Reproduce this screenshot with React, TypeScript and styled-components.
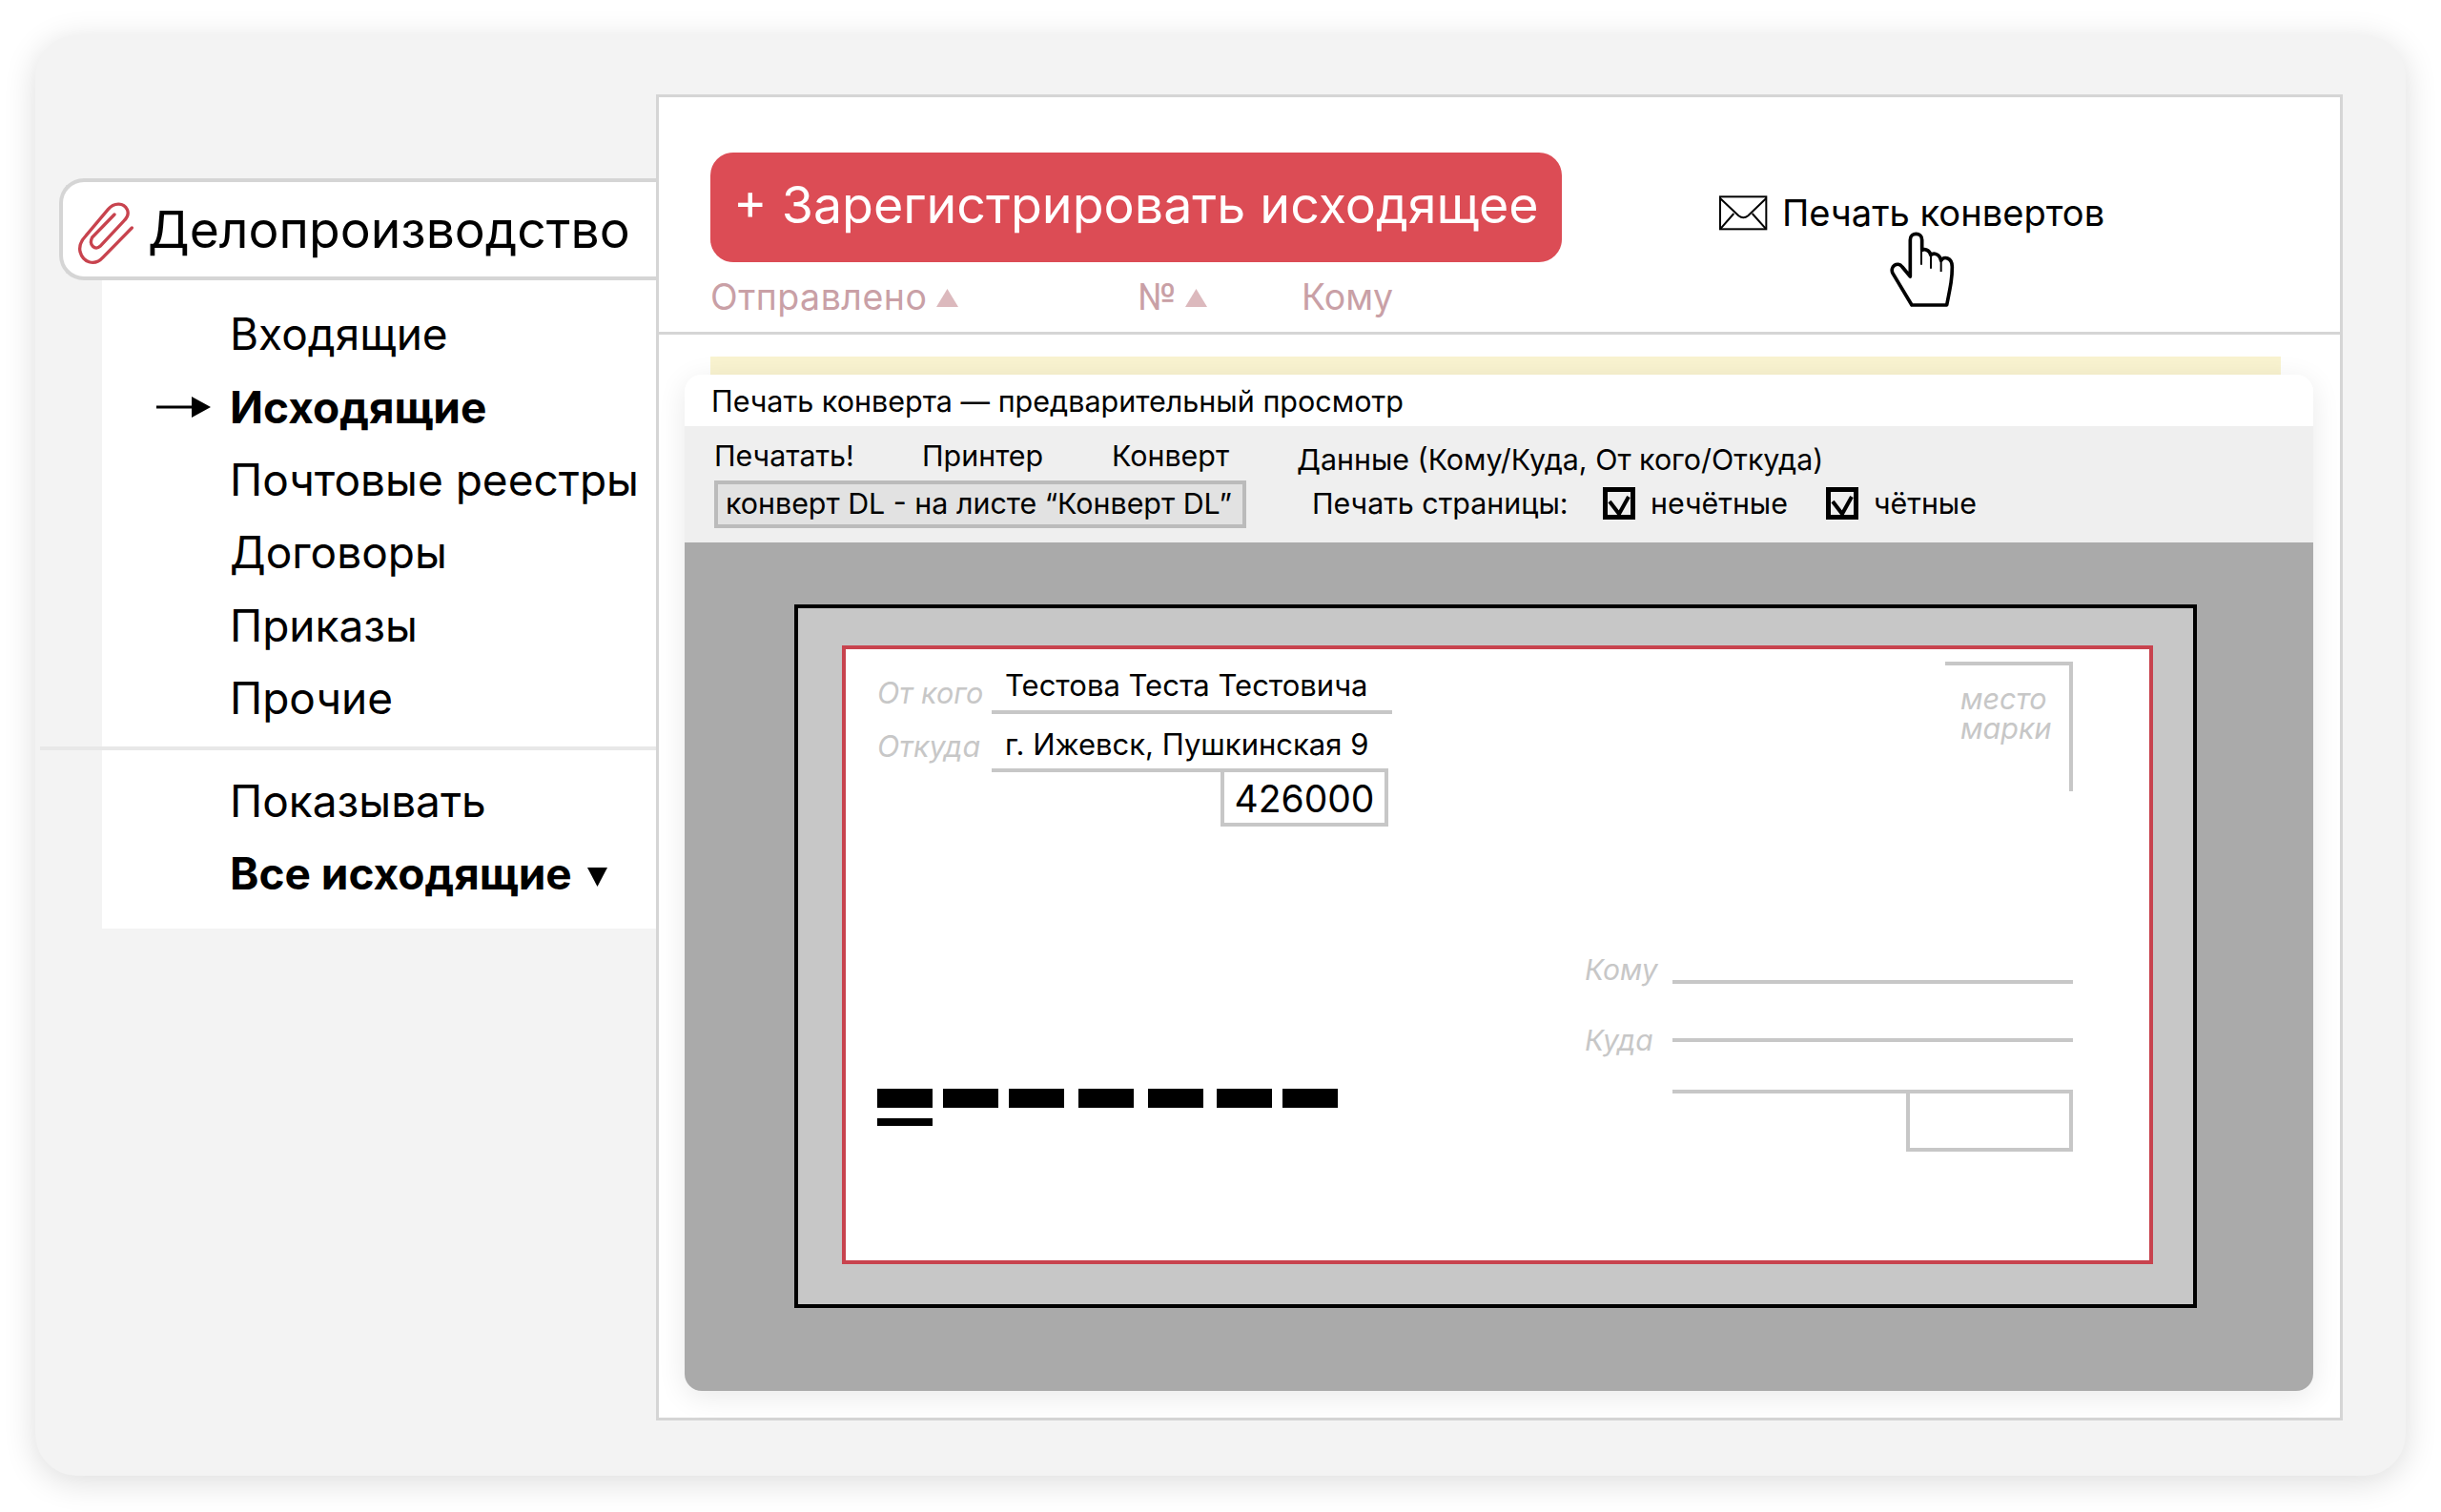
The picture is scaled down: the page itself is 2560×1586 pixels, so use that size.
import styled, { createGlobalStyle } from 'styled-components';

const LINE = '#d5d5d5';
const PAPER_LINE = '#c7c7c7';
const RED = '#c8434e';

const MENU_ITEMS = [
  { label: 'Входящие' },
  { label: 'Исходящие', active: true },
  { label: 'Почтовые реестры' },
  { label: 'Договоры' },
  { label: 'Приказы' },
  { label: 'Прочие' },
];

const BARS = [0, 11, 11, 15, 15, 14, 11];

const GlobalStyle = createGlobalStyle`
  html, body {
    margin: 0;
    padding: 0;
    background: #fff;
  }
  body {
    width: 2560px;
    height: 1586px;
    overflow: hidden;
    color: #000;
    font-family: Inter, "Noto Sans", sans-serif;
  }
  * {
    box-sizing: border-box;
  }
`;

const Card = styled.div`
  display: flex;
  align-items: flex-start;
  width: 2486px;
  height: 1511px;
  margin: 37px;
  padding: 62px 66px 58px 5px;
  background: #f3f3f3;
  border-radius: 44px;
  box-shadow: 0 6px 34px rgba(0, 0, 0, 0.14);
`;

const Sidebar = styled.div`
  flex: none;
  width: 646px;
  margin-top: 88px;
`;

const Tab = styled.div`
  display: flex;
  align-items: center;
  width: 626px;
  height: 107px;
  margin-left: 20px;
  padding-left: 17px;
  background: #fff;
  border: 4px solid ${LINE};
  border-right: none;
  border-radius: 26px 0 0 26px;
`;

const Clip = styled.svg`
  flex: none;
  width: 90px;
  height: 84px;
  margin-left: -13px;
`;

const TabTitle = styled.span`
  margin-left: -5px;
  font-size: 53.4px;
  line-height: 66px;
  white-space: nowrap;
`;

const MenuGroup = styled.div<{ $top: number; $bottom: number }>`
  margin-left: 65px;
  padding: ${({ $top, $bottom }) => `${$top}px 0 ${$bottom}px`};
  background: #fff;
`;

const MenuDivider = styled.div`
  height: 4px;
  background: #e8e8e8;
`;

const MenuItem = styled.div<{ $bold?: boolean }>`
  display: grid;
  grid-template-columns: 134px 1fr;
  align-items: center;
  height: 76.4px;
  font-size: 46px;
  font-weight: ${({ $bold }) => ($bold ? 700 : 400)};
  white-space: nowrap;
`;

const ActiveArrow = styled.svg`
  width: 57px;
  height: 22px;
  margin-left: 57px;
`;

const Caret = styled.svg`
  width: 21px;
  height: 20px;
  margin-left: 16px;
  vertical-align: 3px;
`;

const Panel = styled.div`
  flex: none;
  width: 1769px;
  height: 1391px;
  background: #fff;
  border: 3px solid ${LINE};
`;

const Header = styled.div`
  display: flex;
  height: 249px;
  padding: 58px 0 0 54px;
  border-bottom: 3px solid ${LINE};
`;

const HeaderLeft = styled.div`
  flex: none;
  width: 893px;
`;

const RegisterButton = styled.div`
  display: flex;
  align-items: center;
  height: 115px;
  padding: 0 0 6px 24px;
  color: #fff;
  background: #dc4c55;
  border-radius: 24px;
  font-size: 53.75px;
  white-space: nowrap;
`;

const Columns = styled.div`
  display: grid;
  grid-template-columns: 448px 172px auto;
  margin-top: 15px;
  color: #c9a0a6;
  font-size: 37.5px;
  line-height: 44px;
`;

const Column = styled.span<{ $spacing?: number }>`
  display: flex;
  align-items: center;
  letter-spacing: ${({ $spacing }) => $spacing ?? 0}px;
`;

const SortMark = styled.svg<{ $gap: number }>`
  width: 23px;
  height: 19px;
  margin-left: ${({ $gap }) => $gap}px;
`;

const PrintAction = styled.div`
  position: relative;
  display: flex;
  align-items: center;
  gap: 4px;
  height: 50px;
  margin: 38px 0 0 157px;
  font-size: 38.1px;
  white-space: nowrap;
`;

const EnvelopeIcon = styled.svg`
  flex: none;
  width: 70px;
  height: 50px;
`;

const HandCursor = styled.svg`
  position: absolute;
  left: 175px;
  top: 37px;
  width: 90px;
  height: 96px;
`;

const Body = styled.div`
  padding: 23px 28px 0 27px;
`;

const Strip = styled.div`
  height: 19px;
  margin: 0 34px 0 27px;
  background: #f9f3d0;
`;

const Dialog = styled.div`
  height: 1066px;
  border-radius: 18px;
  box-shadow: 0 6px 30px rgba(0, 0, 0, 0.09);
`;

const DialogTitle = styled.div`
  height: 54px;
  padding: 4px 0 0 28px;
  background: #fff;
  border-radius: 18px 18px 0 0;
  font-size: 30.5px;
  line-height: 48px;
  white-space: nowrap;
`;

const Toolbar = styled.div`
  display: flex;
  height: 122px;
  padding-left: 31px;
  background: #efefef;
  font-size: 30.4px;
  line-height: 36px;
  white-space: nowrap;
`;

const ToolbarLeft = styled.div`
  flex: none;
  width: 558px;
  padding-top: 13px;
`;

const ToolbarTabs = styled.div`
  display: grid;
  grid-template-columns: 218px 199px auto;
`;

const SelectBox = styled.div`
  display: flex;
  align-items: center;
  height: 50px;
  margin-top: 8px;
  padding: 0 0 2px 8px;
  background: #e2e2e2;
  border: 4px solid #bbb;
`;

const ToolbarRight = styled.div`
  margin-left: 53px;
  padding-top: 17px;
`;

const PageOptions = styled.div`
  display: flex;
  align-items: center;
  margin-top: 10px;
  padding-left: 16px;
`;

const PageLabel = styled.span`
  width: 305px;
`;

const PageOption = styled.span<{ $width: number }>`
  display: flex;
  align-items: center;
  gap: 16px;
  width: ${({ $width }) => $width}px;
`;

const CheckBox = styled.svg`
  flex: none;
  width: 34px;
  height: 34px;
`;

const Viewport = styled.div`
  height: 890px;
  padding: 65px 0 0 115px;
  background: #aaa;
  border-radius: 0 0 18px 18px;
`;

const Sheet = styled.div`
  width: 1471px;
  height: 738px;
  padding: 39px 0 0 46px;
  background: ${PAPER_LINE};
  border: 4px solid #000;
`;

const Envelope = styled.div`
  display: flex;
  justify-content: space-between;
  width: 1375px;
  height: 649px;
  padding: 0 80px 0 33px;
  background: #fff;
  border: 4px solid ${RED};
`;

const Sender = styled.div`
  display: flex;
  flex-direction: column;
  padding-top: 19px;
`;

const SenderRow = styled.div`
  display: flex;
`;

const HintLabel = styled.span<{ $width: number; $top: number; $size: number }>`
  flex: none;
  width: ${({ $width }) => $width}px;
  height: 38px;
  margin-top: ${({ $top }) => $top}px;
  color: ${PAPER_LINE};
  font-size: ${({ $size }) => $size}px;
  font-style: italic;
  line-height: 38px;
  white-space: nowrap;
`;

const SenderValue = styled.div<{ $width: number; $top: number; $bottom: number }>`
  width: ${({ $width }) => $width}px;
  padding: ${({ $top, $bottom }) => `${$top}px 0 ${$bottom}px 14px`};
  border-bottom: 4px solid ${PAPER_LINE};
  font-size: 31px;
  line-height: 38px;
  white-space: nowrap;
`;

const ZipBox = styled.div`
  display: flex;
  align-items: center;
  justify-content: center;
  align-self: flex-end;
  width: 176px;
  height: 61px;
  margin: -4px 4px 0 0;
  padding-top: 2px;
  border: 4px solid ${PAPER_LINE};
  font-size: 39px;
`;

const Barcode = styled.div`
  display: flex;
  align-items: flex-start;
  margin-top: 275px;
`;

const BarColumn = styled.div<{ $gap: number }>`
  margin-left: ${({ $gap }) => $gap}px;
`;

const Bar = styled.div`
  width: 58px;
  height: 20px;
  background: #000;
`;

const SubBar = styled.div`
  width: 58px;
  height: 8px;
  margin-top: 11px;
  background: #000;
`;

const Recipient = styled.div`
  display: flex;
  flex-direction: column;
  align-items: flex-end;
  padding-top: 13px;
`;

const Stamp = styled.div`
  width: 134px;
  height: 136px;
  padding: 19px 0 0 16px;
  color: ${PAPER_LINE};
  border-top: 4px solid ${PAPER_LINE};
  border-right: 4px solid ${PAPER_LINE};
  font-size: 30.5px;
  font-style: italic;
  line-height: 31px;
`;

const AddressRow = styled.div<{ $height: number; $top?: number }>`
  display: flex;
  justify-content: flex-end;
  width: 511px;
  height: ${({ $height }) => $height}px;
  margin-top: ${({ $top }) => $top ?? 0}px;
`;

const AddressLine = styled.div`
  flex: none;
  width: 420px;
  border-bottom: 4px solid ${PAPER_LINE};
`;

const IndexBox = styled.div`
  width: 175px;
  height: 65px;
  margin-top: -4px;
  border: 4px solid ${PAPER_LINE};
`;

const CheckMark = () => (
  <CheckBox viewBox="0 0 34 34" fill="none" stroke="#000">
    <rect x="2.5" y="2.5" width="29" height="29" strokeWidth="5" />
    <path d="M7 15l10 13 10-18" strokeWidth="4" />
  </CheckBox>
);

const App = () => (
  <>
    <GlobalStyle />
    <Card>
      <Sidebar>
        <Tab>
          <Clip viewBox="0 0 270 252" fill="none" stroke={RED} strokeWidth="10" strokeLinecap="round">
            <path d="M205 120 L115 212 C85 245 50 225 42 195 C38 175 45 160 60 145 L130 62 C150 38 180 42 190 62 C196 75 190 88 180 98 L105 178 C90 192 68 175 80 150 L150 78" />
          </Clip>
          <TabTitle>Делопроизводство</TabTitle>
        </Tab>
        <MenuGroup $top={18} $bottom={13}>
          {MENU_ITEMS.map((item) => (
            <MenuItem key={item.label} $bold={item.active}>
              {item.active ? (
                <ActiveArrow viewBox="0 0 57 22">
                  <path d="M0 9.5h38v3H0z" />
                  <path d="M37 0l20 11-20 11z" />
                </ActiveArrow>
              ) : (
                <span />
              )}
              <span>{item.label}</span>
            </MenuItem>
          ))}
        </MenuGroup>
        <MenuDivider />
        <MenuGroup $top={14} $bottom={20}>
          <MenuItem>
            <span />
            <span>Показывать</span>
          </MenuItem>
          <MenuItem $bold>
            <span />
            <span>
              Все исходящие
              <Caret viewBox="0 0 21 20">
                <path d="M0 0h21L10.5 20z" />
              </Caret>
            </span>
          </MenuItem>
        </MenuGroup>
      </Sidebar>
      <Panel>
        <Header>
          <HeaderLeft>
            <RegisterButton>+ Зарегистрировать исходящее</RegisterButton>
            <Columns>
              <Column $spacing={0.5}>
                Отправлено
                <SortMark $gap={10} viewBox="0 0 23 19" fill="#dcb9bd">
                  <path d="M11.5 0L23 19H0z" />
                </SortMark>
              </Column>
              <Column>
                №
                <SortMark $gap={9} viewBox="0 0 23 19" fill="#dcb9bd">
                  <path d="M11.5 0L23 19H0z" />
                </SortMark>
              </Column>
              <Column>Кому</Column>
            </Columns>
          </HeaderLeft>
          <PrintAction>
            <EnvelopeIcon viewBox="0 0 210 150" fill="none" stroke="#000" strokeWidth="6">
              <rect x="27" y="25" width="145" height="102" />
              <path d="M27 30L85 85Q100 97 115 85L172 30M27 127L70 78M172 127L128 78" />
            </EnvelopeIcon>
            Печать конвертов
            <HandCursor viewBox="0 0 270 288" fill="#fff" stroke="#000" strokeWidth="11" strokeLinejoin="round">
              <path d="M100 165V50C100 25 137 25 137 50V82C145 78 160 80 165 98C172 90 192 92 197 115C205 100 232 105 232 135C232 170 228 190 215 255H105L45 155C35 135 60 115 75 135Z" />
              <path d="M135 82V128M165 100V140M197 116V150" fill="none" strokeWidth="6" />
            </HandCursor>
          </PrintAction>
        </Header>
        <Body>
          <Strip />
          <Dialog>
            <DialogTitle>Печать конверта — предварительный просмотр</DialogTitle>
            <Toolbar>
              <ToolbarLeft>
                <ToolbarTabs>
                  <span>Печатать!</span>
                  <span>Принтер</span>
                  <span>Конверт</span>
                </ToolbarTabs>
                <SelectBox>конверт DL - на листе “Конверт DL”</SelectBox>
              </ToolbarLeft>
              <ToolbarRight>
                <div>Данные (Кому/Куда, От кого/Откуда)</div>
                <PageOptions>
                  <PageLabel>Печать страницы:</PageLabel>
                  <PageOption $width={234}>
                    <CheckMark />
                    нечётные
                  </PageOption>
                  <PageOption $width={200}>
                    <CheckMark />
                    чётные
                  </PageOption>
                </PageOptions>
              </ToolbarRight>
            </Toolbar>
            <Viewport>
              <Sheet>
                <Envelope>
                  <Sender>
                    <SenderRow>
                      <HintLabel $width={120} $top={8} $size={30.5}>От кого</HintLabel>
                      <SenderValue $width={420} $top={0} $bottom={7}>Тестова Теста Тестовича</SenderValue>
                    </SenderRow>
                    <SenderRow>
                      <HintLabel $width={120} $top={15} $size={30.5}>Откуда</HintLabel>
                      <SenderValue $width={416} $top={13} $bottom={6}>г. Ижевск, Пушкинская 9</SenderValue>
                    </SenderRow>
                    <ZipBox>426000</ZipBox>
                    <Barcode>
                      {BARS.map((gap, i) => (
                        <BarColumn key={i} $gap={gap}>
                          <Bar />
                          {i === 0 && <SubBar />}
                        </BarColumn>
                      ))}
                    </Barcode>
                  </Sender>
                  <Recipient>
                    <Stamp>
                      место
                      <br />
                      марки
                    </Stamp>
                    <AddressRow $height={60} $top={142}>
                      <HintLabel $width={92} $top={26} $size={30}>Кому</HintLabel>
                      <AddressLine />
                    </AddressRow>
                    <AddressRow $height={61}>
                      <HintLabel $width={92} $top={40} $size={30}>Куда</HintLabel>
                      <AddressLine />
                    </AddressRow>
                    <AddressRow $height={54}>
                      <AddressLine />
                    </AddressRow>
                    <IndexBox />
                  </Recipient>
                </Envelope>
              </Sheet>
            </Viewport>
          </Dialog>
        </Body>
      </Panel>
    </Card>
  </>
);

export default App;
